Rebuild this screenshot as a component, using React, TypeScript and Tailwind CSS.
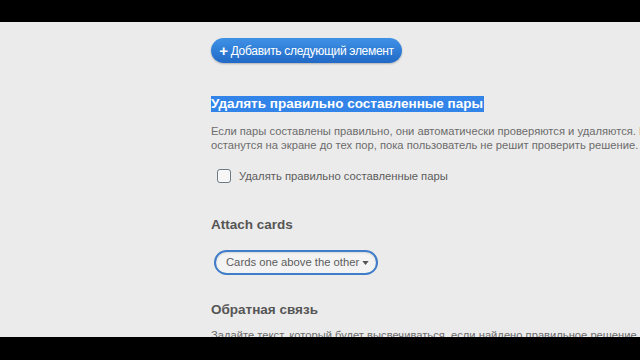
import { useState } from "react";

const FONT = { fontFamily: '"Liberation Sans", Arial, sans-serif' };

export default function App() {
  const [removePairs, setRemovePairs] = useState(false);

  return (
    <div className="w-[640px] h-[360px] overflow-hidden flex flex-col bg-[#ebebeb]" style={FONT}>
      <div className="h-[22px] shrink-0 bg-black" />

      <div className="flex-1 min-h-0 overflow-hidden pl-[211px] flex flex-col items-start [&>*]:shrink-0">
        <button className="mt-[16px] h-[25px] w-[191px] rounded-full bg-gradient-to-b from-[#3f92e6] to-[#2169c6] text-white text-[12px] tracking-[-0.3px] whitespace-nowrap flex items-center justify-center gap-[3px] shadow-[0_1px_2px_rgba(0,0,0,0.25)]">
          <span className="text-[15px] font-bold leading-none -mt-[1px]">+</span>
          <span>Добавить следующий элемент</span>
        </button>

        <h3 className="mt-[33px] h-[16px] leading-[16px] text-[13.5px] font-bold bg-[#3384e8] text-white pr-[1px] whitespace-nowrap">
          Удалять правильно составленные пары
        </h3>

        <div className="mt-[12px] text-[11.2px] leading-[14px] text-[#6b6b6b] whitespace-nowrap">
          <p>Если пары составлены правильно, они автоматически проверяются и удаляются. Иначе они</p>
          <p>останутся на экране до тех пор, пока пользователь не решит проверить решение.</p>
        </div>

        <label className="mt-[16px] ml-[6px] flex items-center gap-[8px] text-[11.25px] text-[#5c5c5c] cursor-pointer whitespace-nowrap">
          <span
            onClick={() => setRemovePairs(!removePairs)}
            className="w-[14px] h-[14px] rounded-[3px] border-[1.5px] border-[#6e7a86] bg-[#f7f7f7] flex items-center justify-center text-[10px] leading-none text-[#2169c6]"
          >
            {removePairs ? "✓" : ""}
          </span>
          <span>Удалять правильно составленные пары</span>
        </label>

        <h3 className="mt-[32px] text-[13.5px] leading-[16px] font-bold text-[#555555]">Attach cards</h3>

        <button className="mt-[17px] ml-[3px] h-[25px] w-[164px] rounded-full border-2 border-[#3f7dc8] bg-[#f3f3f3] shadow-[inset_0_1px_2px_rgba(0,0,0,0.12)] text-[11.25px] text-[#5c5c5c] whitespace-nowrap flex items-center pl-[10px] gap-[3px]">
          <span>Cards one above the other</span>
          <svg width="7" height="4" viewBox="0 0 8 5" className="mt-[1px]">
            <path d="M0 0 L8 0 L4 5 Z" fill="#555" />
          </svg>
        </button>

        <h3 className="mt-[27px] text-[13.5px] leading-[16px] font-bold text-[#555555]">Обратная связь</h3>

        <p className="mt-[10px] text-[11.2px] leading-[14px] text-[#6b6b6b] whitespace-nowrap">
          Задайте текст, который будет высвечиваться, если найдено правильное решение.
        </p>
      </div>

      <div className="h-[23px] shrink-0 bg-black" />
    </div>
  );
}
